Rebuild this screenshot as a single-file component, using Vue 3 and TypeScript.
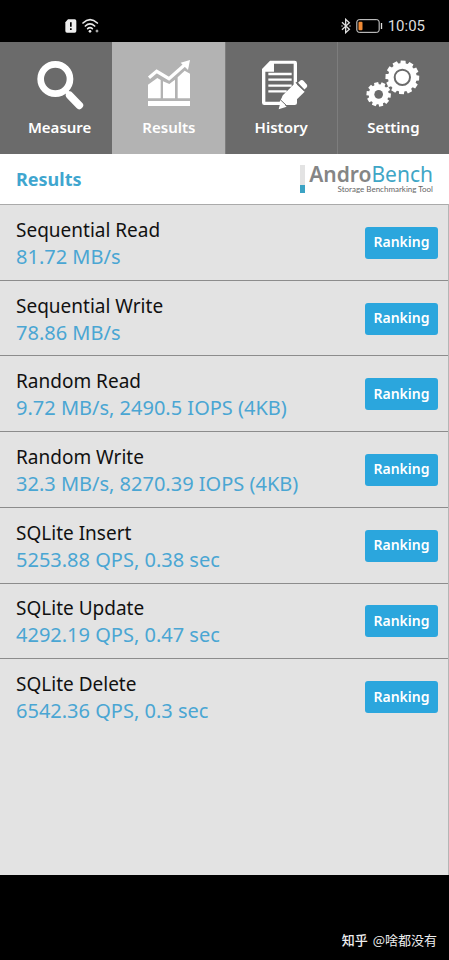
<script setup lang="ts">
import { ref } from 'vue'

interface Result {
  name: string
  value: string
}

const tabs = ['Measure', 'Results', 'History', 'Setting'] as const
const active = ref<string>('Results')

const results: Result[] = [
  { name: 'Sequential Read', value: '81.72 MB/s' },
  { name: 'Sequential Write', value: '78.86 MB/s' },
  { name: 'Random Read', value: '9.72 MB/s, 2490.5 IOPS (4KB)' },
  { name: 'Random Write', value: '32.3 MB/s, 8270.39 IOPS (4KB)' },
  { name: 'SQLite Insert', value: '5253.88 QPS, 0.38 sec' },
  { name: 'SQLite Update', value: '4292.19 QPS, 0.47 sec' },
  { name: 'SQLite Delete', value: '6542.36 QPS, 0.3 sec' },
]

// Outline of a toothed wheel centred on (cx, cy).
function gear(cx: number, cy: number, outer: number, root: number, teeth: number, turn: number): string {
  const step = (Math.PI * 2) / teeth
  const profile: [number, number][] = [[-0.36, root], [-0.27, outer], [0.27, outer], [0.36, root]]
  const points: string[] = []
  for (let i = 0; i < teeth; i++) {
    for (const [offset, radius] of profile) {
      const a = (i + offset) * step + turn
      points.push(`${(cx + Math.cos(a) * radius).toFixed(1)},${(cy + Math.sin(a) * radius).toFixed(1)}`)
    }
  }
  return points.join(' ')
}

const bigGear = gear(535, 232, 51, 43, 12, 0.05)
const smallGear = gear(464, 283, 37, 30, 10, 0.1)
</script>

<template>
  <div class="screen">
    <div class="status">
      <div class="status-group">
        <svg class="sim" viewBox="0 0 36 42" aria-hidden="true">
          <path d="M9 1H29Q34 1 34 6V36Q34 41 29 41H6Q1 41 1 36V10Z" fill="#eee" />
          <path d="M17.500 10V23M17.500 28V33" stroke="#000" stroke-width="5" />
        </svg>
        <svg class="wifi" viewBox="0 0 54 48" aria-hidden="true">
          <g fill="none" stroke="#e8e8e8" stroke-width="5" stroke-linecap="round">
            <path d="M3 15Q24 -5 46 15" />
            <path d="M10 24Q24 11 38 24" />
            <path d="M17 32Q24 26 31 32" />
          </g>
          <circle cx="24" cy="40" r="4" fill="#eee" />
          <path d="M40 39L45 34L50 39L45 44Z" fill="#aaa" />
        </svg>
      </div>
      <div class="status-group">
        <svg class="bluetooth" viewBox="0 0 30 46" aria-hidden="true">
          <path d="M3 12L25 33L14 43V3L25 13L3 34" fill="none" stroke="#ddd" stroke-width="4" />
          <circle cx="3" cy="23" r="2" fill="#ddd" /><circle cx="27" cy="23" r="2" fill="#ddd" />
        </svg>
        <svg class="battery" viewBox="0 0 80 42" aria-hidden="true">
          <rect x="2" y="2" width="67" height="38" rx="7" fill="none" stroke="#ddd" stroke-width="3" />
          <rect x="7" y="8" width="12" height="26" rx="3" fill="#f08a35" />
          <path d="M76 12V30" stroke="#ddd" stroke-width="4" />
        </svg>
        <span class="clock">10:05</span>
      </div>
    </div>

    <nav class="tabs">
      <button
        v-for="tab in tabs"
        :key="tab"
        type="button"
        class="tab"
        :class="{ active: active === tab }"
        @click="active = tab"
      >
        <svg v-if="tab === 'Measure'" class="tab-icon" viewBox="95 174 168 156" aria-hidden="true">
          <circle cx="165" cy="237" r="44" fill="none" stroke="#fff" stroke-width="20" />
          <path d="M195 270L204 280" stroke="#fff" stroke-width="12" />
          <path d="M208 286L237 316" stroke="#fff" stroke-width="23" stroke-linecap="round" />
        </svg>
        <svg v-else-if="tab === 'Results'" class="tab-icon" viewBox="423 174 168 156" aria-hidden="true">
          <path d="M444 303H570V318H444ZM444 254L472 234L482 240V295H444ZM489 244L508 252L525 239V295H489ZM533 232L554 212L570 221V295H533Z" fill="#fff" />
          <path d="M447 233L470 214L507 236L556 193" fill="none" stroke="#fff" stroke-width="10" />
          <path d="M542 188L570 180L564 210Z" fill="#fff" />
        </svg>
        <svg v-else-if="tab === 'History'" class="tab-icon" viewBox="86 174 168 156" aria-hidden="true">
          <path fill-rule="evenodd" d="M137 182H211Q218 182 218 189V309Q218 315 211 315H120Q113 315 113 308V207ZM149 191V215H123V305H166L176 286L208 254V191Z" fill="#fff" />
          <path d="M132 222H202M132 239H202M132 257H202M132 274H187" stroke="#fff" stroke-width="7" />
          <path d="M175 287L213 249L241 275L204 311L172 315Z" fill="#fff" />
          <path d="M169 304L163 328L187 320Z" fill="#fff" />
          <path d="M168 299L191 321" stroke="#6b6b6b" stroke-width="3" />
          <path d="M221 248L229 241Q234 239 238 243L248 254Q250 259 247 262L240 269Z" fill="#fff" />
          <path d="M215 247L242 273" stroke="#6b6b6b" stroke-width="4" />
        </svg>
        <svg v-else class="tab-icon" viewBox="423 174 168 156" aria-hidden="true">
          <polygon :points="smallGear" fill="#fff" />
          <circle cx="464" cy="283" r="13" fill="#6b6b6b" />
          <polygon :points="bigGear" fill="#fff" />
          <circle cx="535" cy="232" r="23" fill="#fff" stroke="#6b6b6b" stroke-width="6" />
        </svg>
        <span>{{ tab }}</span>
      </button>
    </nav>

    <header class="heading">
      <h1>Results</h1>
      <div class="brand">
        <span class="brand-bar"></span>
        <div class="brand-text">
          <div class="brand-name"><b>Andro</b>Bench</div>
          <div class="brand-tag">Storage Benchmarking Tool</div>
        </div>
      </div>
    </header>

    <main class="content">
      <ul class="list">
        <li v-for="item in results" :key="item.name" class="row">
          <div>
            <div class="name">{{ item.name }}</div>
            <div class="value">{{ item.value }}</div>
          </div>
          <button type="button" class="ranking">Ranking</button>
        </li>
      </ul>
    </main>

    <footer class="footer"><b>知乎</b><span>@啥都没有</span></footer>
  </div>
</template>

<style>
body {
  margin: 0;
  background: #000;
}
</style>

<style scoped>
.screen {
  display: flex;
  flex-direction: column;
  min-height: 100vh;
  font-family: "Noto Sans", "Noto Sans CJK SC", sans-serif;
  background: #000;
}
.status {
  display: flex;
  justify-content: space-between;
  box-sizing: border-box;
  height: 42px;
  padding: 10px 24px 0 65px;
}
.status-group {
  display: flex;
  align-items: center;
  gap: 5px;
}
.sim {
  width: 12px;
  height: 14px;
}
.wifi {
  width: 18px;
  height: 16px;
}
.bluetooth {
  width: 10px;
  height: 16px;
}
.battery {
  width: 27px;
  height: 14px;
}
.clock {
  font-family: Roboto, sans-serif;
  font-size: 15px;
  line-height: 20px;
  color: #ddd;
}
.tabs {
  display: grid;
  grid-template-columns: repeat(4, 1fr);
}
.tab {
  display: flex;
  flex-direction: column;
  align-items: center;
  gap: 7px;
  height: 112px;
  padding: 16px 0 0;
  border: 0;
  border-left: 1px solid #7d7d7d;
  background: #6b6b6b;
  color: #fff;
  font-family: inherit;
  font-size: 15px;
  font-weight: 600;
  line-height: 20px;
}
.tab:first-child {
  padding-left: 7px;
  border-left: 0;
}
.tab.active {
  background: #b3b3b3;
  border-left-color: #b3b3b3;
}
.tab-icon {
  width: 56px;
  height: 52px;
}
.heading {
  display: flex;
  align-items: center;
  justify-content: space-between;
  box-sizing: border-box;
  height: 50px;
  padding: 0 16px;
  background: #fff;
}
h1 {
  margin: 0;
  font-size: 18px;
  line-height: 24px;
  color: #3fa6cf;
}
.brand {
  display: flex;
  align-items: center;
  gap: 4px;
}
.brand-bar {
  width: 5px;
  height: 28px;
  background: linear-gradient(#e3e3e3 20px, #3ba3c4 20px);
}
.brand-name {
  font-size: 21px;
  line-height: 20px;
  color: #3fa6c6;
}
.brand-name b {
  font-weight: 600;
  color: #858585;
}
.brand-tag {
  font-family: Lato, sans-serif;
  font-size: 8px;
  line-height: 10px;
  text-align: right;
  color: #666;
}
.content {
  flex: 1;
  border-top: 1px solid #aaa;
  border-right: 1px solid #b5b5b5;
  background: #e3e3e3;
}
.list {
  display: grid;
  grid-auto-rows: 1fr;
  min-height: 530px;
  margin: 0;
  padding: 0;
  list-style: none;
}
.row {
  display: flex;
  align-items: center;
  justify-content: space-between;
  padding: 1px 10px 0 16px;
  border-bottom: 1px solid #8c8c8c;
}
.row:last-child {
  border-bottom-color: transparent;
}
.name {
  font-size: 19px;
  line-height: 27px;
  color: #111;
}
.value {
  font-size: 20px;
  line-height: 25px;
  color: #4aa6d3;
}
.ranking {
  width: 73px;
  height: 32px;
  padding: 0 0 2px;
  border: 0;
  border-radius: 3px;
  background: #2ba6dd;
  color: #fff;
  font-family: inherit;
  font-size: 14px;
  font-weight: 600;
}
.footer {
  display: flex;
  justify-content: flex-end;
  align-items: flex-end;
  gap: 5px;
  box-sizing: border-box;
  height: 85px;
  padding: 0 12px 11px;
  font-family: "Noto Sans CJK SC", sans-serif;
  font-size: 13px;
  line-height: 18px;
  color: #eee;
}
.footer b {
  font-weight: 500;
}
</style>
